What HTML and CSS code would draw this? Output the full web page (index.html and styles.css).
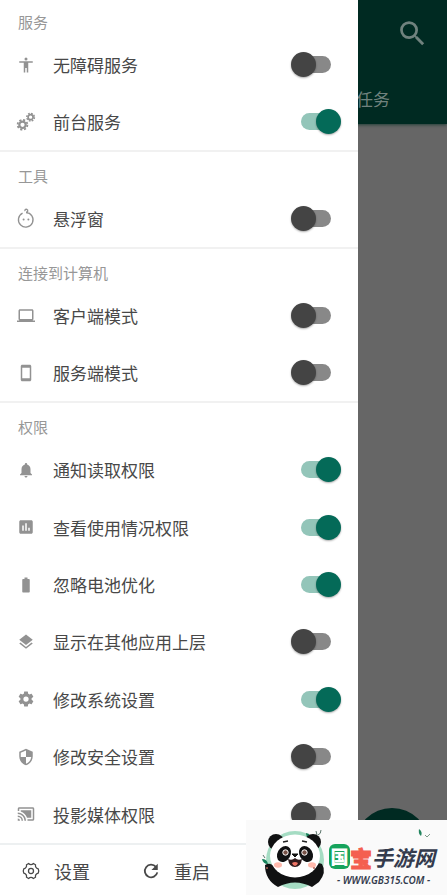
FILE: index.html
```html
<!DOCTYPE html>
<html lang="zh-CN">
<head>
<meta charset="utf-8">
<meta name="viewport" content="width=device-width, initial-scale=1">
<title>设置</title>
<link rel="stylesheet" href="styles.css">
</head>
<body>
<main class="page">
  <header class="appbar">
    <button class="search" type="button" aria-label="搜索">
      <svg viewBox="0 0 24 24"><path d="M15.5 14h-.79l-.28-.27A6.47 6.47 0 0 0 16 9.5 6.5 6.5 0 1 0 9.5 16c1.61 0 3.09-.59 4.23-1.57l.27.28v.79l5 4.99L20.49 19l-4.99-5zm-6 0C7.01 14 5 11.99 5 9.5S7.01 5 9.5 5 14 7.01 14 9.5 11.99 14 9.5 14z"/></svg>
    </button>
    <a class="tab" href="#tasks">任务</a>
  </header>
  <button class="fab" type="button" aria-label="添加"></button>
</main>

<aside class="drawer">
  <section class="group">
    <h2>服务</h2>
    <label class="row">
      <svg class="icon" viewBox="0 0 24 24"><path d="M12 2a2 2 0 1 1 0 4 2 2 0 0 1 0-4zm9 7h-6v13h-2v-6h-2v6H9V9H3V7h18v2z"/></svg>
      <span>无障碍服务</span><input class="switch" type="checkbox">
    </label>
    <label class="row">
      <svg class="icon line" viewBox="0 0 18 18">
        <circle cx="5.500" cy="11.800" r="3.200" stroke-width="2.200"/><circle cx="5.500" cy="11.800" r="4.900" stroke-width="1.800" stroke-dasharray="2.100 1.750"/>
        <circle cx="13.600" cy="4.200" r="2.500" stroke-width="1.700"/><circle cx="13.600" cy="4.200" r="3.800" stroke-width="1.500" stroke-dasharray="1.700 1.280"/>
      </svg>
      <span>前台服务</span><input class="switch" type="checkbox" checked>
    </label>
  </section>

  <section class="group">
    <h2>工具</h2>
    <label class="row">
      <svg class="icon line" viewBox="0 0 18 18">
        <path d="M5.600 3.200A7.300 7.300 0 1 0 9 2.500C10.800 2.600 11.500.2 9.800-.6 8.400-1.100 7.400.2 8.200 1" stroke-width="1.300"/>
        <circle class="solid" cx="6.600" cy="9.600" r="1"/><circle class="solid" cx="11.400" cy="9.600" r="1"/>
      </svg>
      <span>悬浮窗</span><input class="switch" type="checkbox">
    </label>
  </section>

  <section class="group">
    <h2>连接到计算机</h2>
    <label class="row">
      <svg class="icon" viewBox="0 0 24 24"><path d="M20 18c1.100 0 1.990-.9 1.990-2L22 5c0-1.100-.9-2-2-2H4c-1.100 0-2 .9-2 2v11c0 1.100.9 2 2 2H0v2h24v-2h-4zM4 5h16v11H4V5z"/></svg>
      <span>客户端模式</span><input class="switch" type="checkbox">
    </label>
    <label class="row">
      <svg class="icon" viewBox="0 0 24 24"><path d="M17 1.010 7 1c-1.100 0-2 .9-2 2v18c0 1.100.9 2 2 2h10c1.100 0 2-.9 2-2V3c0-1.100-.9-1.990-2-1.990zM17 19H7V5h10v14z"/></svg>
      <span>服务端模式</span><input class="switch" type="checkbox">
    </label>
  </section>

  <section class="group">
    <h2>权限</h2>
    <label class="row">
      <svg class="icon" viewBox="0 0 24 24"><path d="M12 22c1.100 0 2-.9 2-2h-4c0 1.100.89 2 2 2zm6-6v-5c0-3.070-1.640-5.640-4.500-6.320V4c0-.83-.67-1.500-1.500-1.500s-1.500.67-1.500 1.500v.68C7.630 5.360 6 7.920 6 11v5l-2 2v1h16v-1l-2-2z"/></svg>
      <span>通知读取权限</span><input class="switch" type="checkbox" checked>
    </label>
    <label class="row">
      <svg class="icon" viewBox="0 0 24 24"><path d="M19 3H5c-1.100 0-2 .9-2 2v14c0 1.100.9 2 2 2h14c1.100 0 2-.9 2-2V5c0-1.100-.9-2-2-2zM9 17H7v-7h2v7zm4 0h-2V7h2v10zm4 0h-2v-4h2v4z"/></svg>
      <span>查看使用情况权限</span><input class="switch" type="checkbox" checked>
    </label>
    <label class="row">
      <svg class="icon" viewBox="0 0 24 24"><path d="M15.670 4H14V2h-4v2H8.330C7.600 4 7 4.600 7 5.330v15.330C7 21.400 7.600 22 8.330 22h7.330c.74 0 1.340-.6 1.340-1.330V5.330C17 4.600 16.400 4 15.670 4z"/></svg>
      <span>忽略电池优化</span><input class="switch" type="checkbox" checked>
    </label>
    <label class="row">
      <svg class="icon" viewBox="0 0 24 24"><path d="M11.990 18.540 4.620 12.810 3 14.070l9 7 9-7-1.630-1.270-7.380 5.740zM12 16l7.360-5.730L21 9l-9-7-9 7 1.630 1.270L12 16z"/></svg>
      <span>显示在其他应用上层</span><input class="switch" type="checkbox">
    </label>
    <label class="row">
      <svg class="icon" viewBox="0 0 24 24"><path d="M19.430 12.980c.04-.32.07-.64.07-.98s-.03-.66-.07-.98l2.110-1.650c.19-.15.24-.42.12-.64l-2-3.460c-.12-.22-.39-.3-.61-.22l-2.490 1c-.52-.4-1.080-.73-1.690-.98l-.38-2.650A.488.488 0 0 0 14 2h-4c-.25 0-.46.18-.49.42l-.38 2.650c-.61.25-1.170.59-1.690.98l-2.490-1c-.23-.09-.49 0-.61.22l-2 3.460c-.13.22-.07.49.12.64l2.110 1.650c-.04.32-.07.65-.07.98s.03.66.07.98l-2.110 1.650c-.19.15-.24.42-.12.64l2 3.460c.12.22.39.3.61.22l2.490-1c.52.4 1.080.73 1.690.98l.38 2.650c.03.24.24.42.49.42h4c.25 0 .46-.18.49-.42l.38-2.650c.61-.25 1.170-.59 1.690-.98l2.490 1c.23.09.49 0 .61-.22l2-3.460c.12-.22.07-.49-.12-.64l-2.110-1.650zM12 15.500a3.500 3.500 0 1 1 0-7 3.500 3.500 0 0 1 0 7z"/></svg>
      <span>修改系统设置</span><input class="switch" type="checkbox" checked>
    </label>
    <label class="row">
      <svg class="icon" viewBox="0 0 24 24"><path d="M12 1 3 5v6c0 5.550 3.840 10.740 9 12 5.160-1.260 9-6.450 9-12V5l-9-4zm0 10.990h7c-.53 4.120-3.280 7.790-7 8.940V12H5V6.300l7-3.110v8.800z"/></svg>
      <span>修改安全设置</span><input class="switch" type="checkbox">
    </label>
    <label class="row">
      <svg class="icon" viewBox="0 0 24 24"><path d="M1 18v3h3a3 3 0 0 0-3-3zm0-4v2a5 5 0 0 1 5 5h2a7 7 0 0 0-7-7zm18-7H5v1.630c3.960 1.280 7.090 4.410 8.370 8.370H19V7zM1 10v2a9 9 0 0 1 9 9h2c0-6.080-4.930-11-11-11zm20-7H3c-1.100 0-2 .9-2 2v3h2V5h18v14h-7v2h7c1.100 0 2-.9 2-2V5c0-1.100-.9-2-2-2z"/></svg>
      <span>投影媒体权限</span><input class="switch" type="checkbox">
    </label>
  </section>

  <footer class="actions">
    <button type="button">
      <svg viewBox="0 0 20 20" class="outline"><path d="M7.300 1.600Q10 4.400 12.700 1.600L15 3Q14.400 6.600 18 7.600Q19.200 10 18 12.400Q14.400 13.400 15 17L12.700 18.400Q10 15.600 7.300 18.400L5 17Q5.600 13.400 2 12.400Q.8 10 2 7.600Q5.600 6.600 5 3Z"/><circle cx="10" cy="10" r="2.800"/></svg>
      <span>设置</span>
    </button>
    <button type="button">
      <svg viewBox="0 0 20 20" class="outline"><path d="M15.500 5.500A7 7 0 1 0 17 11.500" stroke-width="2"/><path class="tip" d="M17.500 2v7h-7z"/></svg>
      <span>重启</span>
    </button>
  </footer>
</aside>

<div class="badge">
  <svg class="panda" viewBox="0 0 66 62" aria-hidden="true">
    <circle cx="34" cy="31" r="29" fill="#a5dcc3"/>
    <path d="M45 4q6 1 5 7-5-2-5-7M1 30q5 0 6 5-5 0-6-5" fill="#16805a"/>
    <path d="M55 2l1 4M60 1q0 4-3 5M2 26l2 3" stroke="#5b756b" fill="none"/>
    <path d="M4 36q7-4 11 5h38q2-9 8-6 5 8-3 18l-7 5q-17-9-34 0-13-7-13-22" fill="#101112"/>
    <circle cx="15" cy="13" r="8" fill="#101112"/><circle cx="52" cy="13" r="8" fill="#101112"/>
    <ellipse cx="34" cy="27" rx="25" ry="21.500" fill="#fff"/>
    <ellipse cx="23" cy="25" rx="6.500" ry="8.500" transform="rotate(30 23 25)" fill="#101112"/>
    <ellipse cx="45" cy="25" rx="6.500" ry="8.500" transform="rotate(-30 45 25)" fill="#101112"/>
    <circle cx="24.500" cy="23.500" r="2.700" fill="#765146" stroke="#fff"/><circle cx="43.500" cy="23.500" r="2.700" fill="#765146" stroke="#fff"/>
    <path d="M22 13l5-1M41 12l5 1" stroke="#222" stroke-width="1.400"/>
    <path d="M31 25h6l-3 3z" fill="#111" stroke="#111"/>
    <path d="M27 30q4 2 7-1 3 3 7 1-1 8-7 8t-7-8" fill="#301b1d"/><path d="M31 34q3-2 6 0-1 3-3 3t-3-3" fill="#ef7566"/>
    <ellipse cx="17" cy="36" rx="4" ry="2.700" fill="#ffb9ac"/><ellipse cx="51" cy="36" rx="4" ry="2.700" fill="#ffb9ac"/>
    <circle cx="6" cy="39" r="1" fill="#ad6055"/><circle cx="53" cy="39" r="1" fill="#ad6055"/>
  </svg>
  <div class="brand">
    <p class="name"><b class="guo">国</b><b class="bao">宝</b><span>手游网</span></p>
    <p class="url">- WWW.GB315.COM -</p>
    <svg class="leaf" viewBox="0 0 14 10" aria-hidden="true"><path d="M2 0q4 3 2 7-3-2-2-7" fill="#23855f"/><path d="M8 6l2 2 3-3" stroke="#7c9989" fill="none"/></svg>
  </div>
</div>
</body>
</html>
```
FILE: styles.css
```css
* { box-sizing: border-box; }

body {
  margin: 0;
  min-height: 100vh;
  display: grid;
  grid-template-columns: 4fr 1fr;
  background: #666;
  font-family: "Noto Sans CJK SC", sans-serif;
  color: #484848;
}

h2, p { margin: 0; }

button {
  border: 0;
  padding: 0;
  background: none;
  font: inherit;
  color: inherit;
}

svg { display: block; overflow: visible; }

.page {
  grid-area: 1 / 1 / 2 / 3;
  display: flex;
  flex-direction: column;
  justify-content: space-between;
  align-items: flex-end;
}

.appbar {
  width: 100%;
  display: flex;
  flex-direction: column;
  align-items: flex-end;
  background: #002a22;
  color: #70827e;
  box-shadow: 0 1px 3px #233f39;
}

.search { height: 66px; padding-right: 18px; }
.search svg { width: 33px; height: 33px; fill: currentColor; }

.tab {
  padding: 8px 57px 0 0;
  font-size: 17px;
  line-height: 50px;
  color: inherit;
  text-decoration: none;
}

.fab {
  width: 74px;
  height: 74px;
  margin: 0 18px 13px;
  border-radius: 50%;
  background: #002a22;
}

.drawer {
  grid-area: 1 / 1;
  z-index: 1;
  display: flex;
  flex-direction: column;
  background: #fff;
}

.group {
  display: grid;
  grid-template-rows: 38px;
  grid-auto-rows: minmax(57px, 1fr);
  border-bottom: 2px solid #f1f1f1;
}

.group:first-child { grid-template-rows: 36px; }
.group:nth-child(4) { flex: 1; border-color: #edf0f1; }

h2 {
  padding: 10px 18px 0;
  font-size: 15px;
  font-weight: 400;
  line-height: 28px;
  color: #979797;
}

.group:first-child h2 { padding-top: 8px; }

.row {
  display: flex;
  align-items: center;
  padding: 0 17px;
  font-size: 17px;
}

.row span { flex: 1; padding-left: 18px; }

.icon { width: 18px; height: 18px; fill: #929292; }
.line { fill: none; stroke: #929292; }
.solid { fill: #929292; stroke: none; }

.switch {
  appearance: none;
  display: grid;
  align-items: center;
  width: 50px;
  height: 25px;
  margin: 0;
}

.switch::before,
.switch::after { content: ""; grid-area: 1 / 1; }

.switch::before {
  height: 17px;
  margin: 0 10px;
  border-radius: 9px;
  background: #888;
}

.switch::after {
  width: 25px;
  height: 25px;
  border-radius: 50%;
  background: #444;
  box-shadow: 0 1px 2px #0005;
}

.switch:checked::before { background: #93c5b9; }
.switch:checked::after { justify-self: end; background: #046a58; }

.actions {
  display: flex;
  height: 50px;
  padding: 2px 22px 0;
  font-size: 18px;
}

.actions button {
  display: flex;
  align-items: center;
  gap: 14px;
  width: 120px;
}

.actions svg { width: 18px; height: 18px; }
.outline { fill: none; stroke: #484848; stroke-width: 1.4; }
.tip { fill: #484848; stroke: none; }

.badge {
  position: fixed;
  right: 0;
  bottom: 0;
  z-index: 2;
  width: 201px;
  height: 75px;
  display: flex;
  align-items: center;
  padding-left: 15px;
  background: #fafafa;
}

.panda { width: 66px; height: 62px; margin-top: 4px; }

.brand { position: relative; padding-top: 12px; color: #343b4d; }

.name {
  display: flex;
  align-items: center;
  height: 32px;
  font-size: 21px;
  font-weight: 700;
  font-style: italic;
}

.name b { font-size: 22px; font-style: normal; }
.name .guo {
  width: 21px;
  margin-left: 2px;
  border-radius: 6px;
  background: #16a35c;
  color: #fff;
  font-size: 18px;
  line-height: 25px;
  text-align: center;
}
.bao { color: #f45f50; -webkit-text-stroke: 1px #f45f50; }

.url {
  padding-left: 10px;
  font-family: "Noto Sans", sans-serif;
  font-size: 10px;
  font-weight: 600;
  font-style: italic;
  line-height: 14px;
}

.leaf { position: absolute; right: 4px; top: 0; width: 14px; height: 10px; }
```
